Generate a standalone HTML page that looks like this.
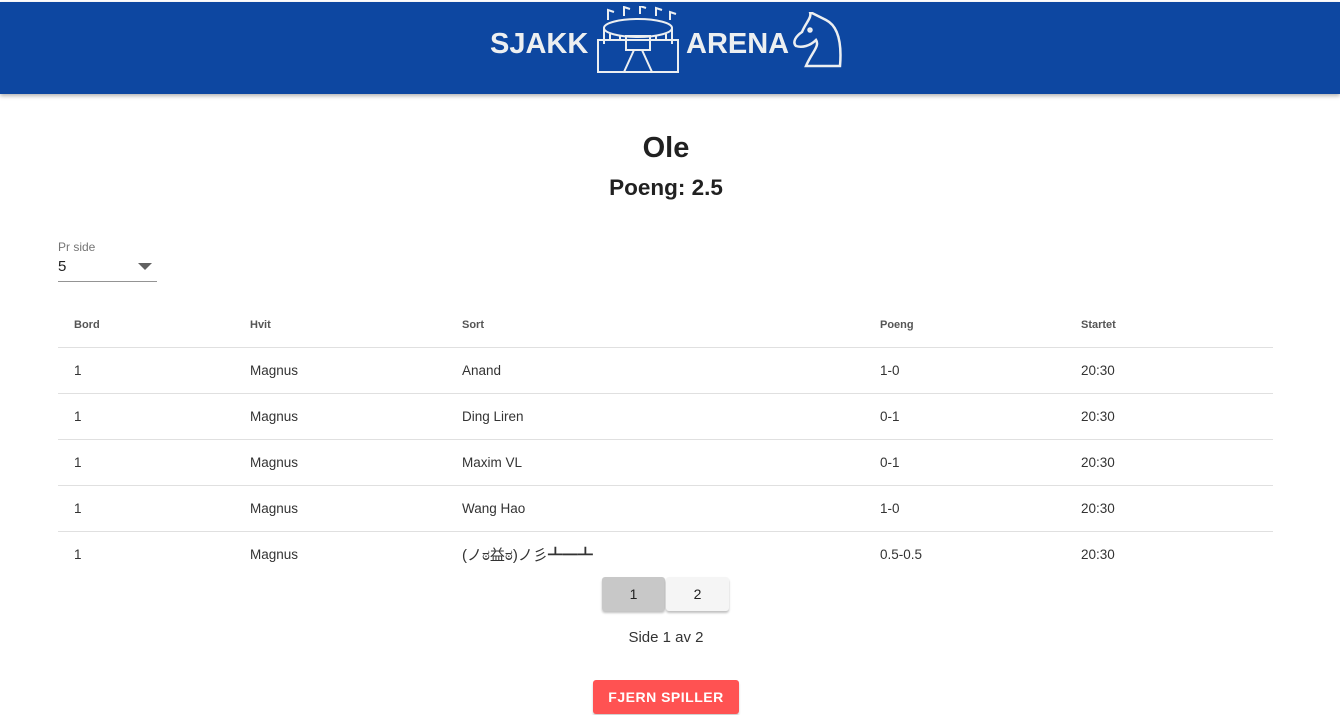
<!DOCTYPE html>
<html><head><meta charset="utf-8"><style>
body{margin:0;width:1340px;height:715px;overflow:hidden;background:#fff;font-family:"Liberation Sans","Noto Sans CJK JP",sans-serif;color:#212121;position:relative}
.hdr{position:absolute;left:0;top:2px;width:1340px;height:92px;background:#0d47a1;box-shadow:0 2px 4px rgba(0,0,0,.3)}
.logo{position:absolute;color:#eceff1;font-weight:bold;font-size:29px;top:26px}
h1{position:absolute;top:132px;left:0;width:1332px;text-align:center;margin:0;font-size:29px;font-weight:bold}
h2{position:absolute;top:175px;left:0;width:1332px;text-align:center;margin:0;font-size:22.5px;font-weight:bold}
.abs{position:absolute}
.row{position:absolute;left:58px;width:1215px;height:46px;border-bottom:1px solid #e0e0e0;font-size:13.5px;color:#333}
.row span{position:absolute;top:16px}
.th{font-size:11px;font-weight:bold;color:#555}
.btn{position:absolute;top:577px;width:63px;height:34px;border-radius:3px;box-shadow:0 2px 2px rgba(0,0,0,.25);text-align:center;line-height:34px;font-size:14px}
</style></head><body>
<div class="hdr">
<div class="logo" style="left:490px">SJAKK</div>
<svg class="abs" style="left:596px;top:4px" width="84" height="68" viewBox="0 0 84 68" fill="none" stroke="#eceff1" stroke-width="2">
<rect x="2" y="34" width="80" height="32"/>
<path d="M28 66 L38 44 M56 66 L46 44"/>
<rect x="30" y="30" width="24" height="14"/>
<ellipse cx="42" cy="22" rx="34" ry="9"/>
<path d="M8 22 V38 M76 22 V38 M14 28 V34 M70 28 V34 M24 30V34 M60 30 V34"/>
<path d="M12 14 V4 l6 2 M28 10 V1 l6 2 M44 8 V0 l6 2 M60 10 V2 l6 2 M74 14 V6 l6 2"/>
</svg>
<div class="logo" style="left:686px">ARENA</div>
<svg class="abs" style="left:790px;top:10px" width="54" height="56" viewBox="0 0 54 56" fill="none" stroke="#eceff1" stroke-width="2.5">
<path d="M16 54 C22 40 30 34 26 28 C20 34 12 36 6 34 C2 30 6 24 12 20 C16 10 22 6 20 0 C28 4 32 6 36 8 C48 14 52 30 50 54 Z"/>
<circle cx="20" cy="18" r="1.5"/>
</svg>
</div>
<h1>Ole</h1>
<h2>Poeng: 2.5</h2>
<div class="abs" style="left:58px;top:240px;font-size:12px;color:#757575">Pr side</div>
<div class="abs" style="left:58px;top:258px;font-size:15px">5</div>
<div class="abs" style="left:138px;top:263px;width:0;height:0;border-left:7px solid transparent;border-right:7px solid transparent;border-top:7px solid #616161"></div>
<div class="abs" style="left:58px;top:281px;width:99px;height:1px;background:#949494"></div>
<div class="row th" style="top:301px"><span style="left:16px;top:18px">Bord</span><span style="left:192px;top:18px">Hvit</span><span style="left:404px;top:18px">Sort</span><span style="left:822px;top:18px">Poeng</span><span style="left:1023px;top:18px">Startet</span></div>
<div class="row" style="top:347px"><span style="left:16px">1</span><span style="left:192px">Magnus</span><span style="left:404px">Anand</span><span style="left:822px">1-0</span><span style="left:1023px">20:30</span></div>
<div class="row" style="top:393px"><span style="left:16px">1</span><span style="left:192px">Magnus</span><span style="left:404px">Ding Liren</span><span style="left:822px">0-1</span><span style="left:1023px">20:30</span></div>
<div class="row" style="top:439px"><span style="left:16px">1</span><span style="left:192px">Magnus</span><span style="left:404px">Maxim VL</span><span style="left:822px">0-1</span><span style="left:1023px">20:30</span></div>
<div class="row" style="top:485px"><span style="left:16px">1</span><span style="left:192px">Magnus</span><span style="left:404px">Wang Hao</span><span style="left:822px">1-0</span><span style="left:1023px">20:30</span></div>
<div class="row" style="top:531px;border:none"><span style="left:16px">1</span><span style="left:192px">Magnus</span><span style="left:404px;font-size:15px;top:13px">(ノಠ益ಠ)ノ彡┻━┻</span><span style="left:822px">0.5-0.5</span><span style="left:1023px">20:30</span></div>
<div class="btn" style="left:602px;background:#c8c8c8">1</div>
<div class="btn" style="left:666px;background:#f5f5f5">2</div>
<div class="abs" style="top:629px;left:0;width:1332px;text-align:center;font-size:15px;color:#333">Side 1 av 2</div>
<div class="abs" style="left:593px;top:680px;width:146px;height:34px;background:#ff5252;border-radius:3px;color:#fff;font-weight:bold;font-size:14px;letter-spacing:.5px;text-align:center;line-height:34px;box-shadow:0 2px 2px rgba(0,0,0,.2)">FJERN SPILLER</div>
</body></html>
